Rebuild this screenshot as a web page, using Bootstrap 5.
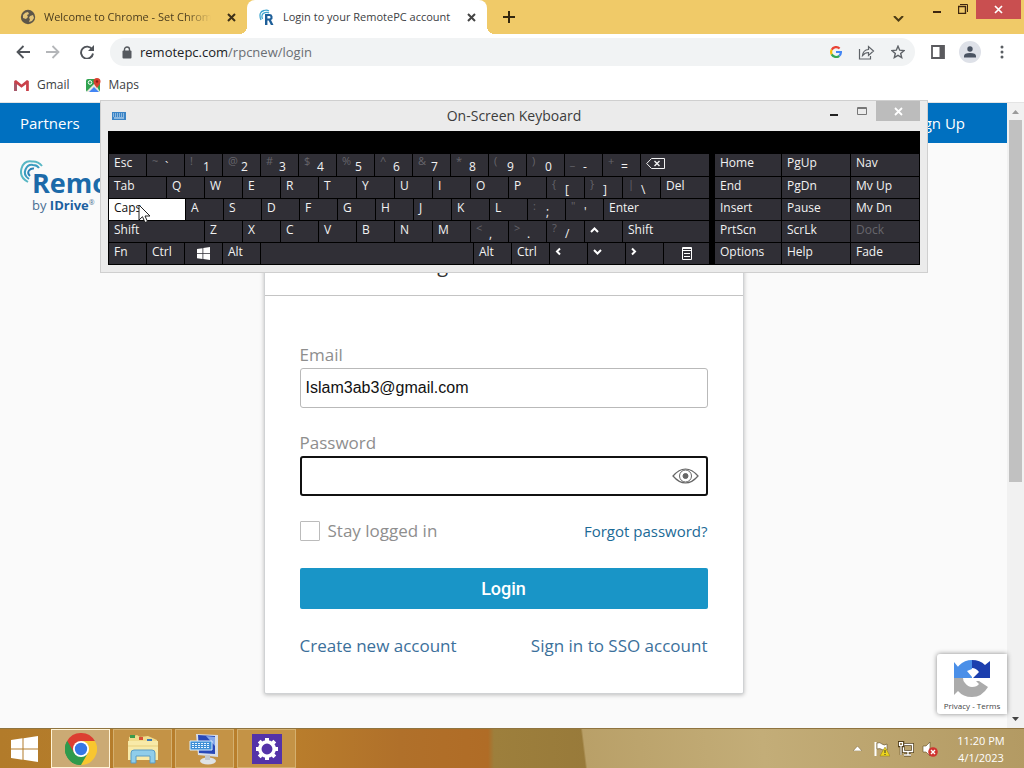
<!DOCTYPE html>
<html lang="en">
<head>
<meta charset="utf-8">
<meta name="viewport" content="width=device-width, initial-scale=1">
<title>Login to your RemotePC account</title>
<link rel="stylesheet" href="https://cdn.jsdelivr.net/npm/bootstrap@5.3.0/dist/css/bootstrap.min.css">
<script src="https://cdn.jsdelivr.net/npm/bootstrap@5.3.0/dist/js/bootstrap.bundle.min.js"></script>
<style>
  body { font-family: "Open Sans", "Noto Sans", sans-serif; font-size: 12px; line-height: 18px; color: #3c4043; overflow: hidden; }
  button { border: 0; background: none; padding: 0; color: inherit; line-height: inherit; font-family: inherit; font-size: inherit; }
  svg { display: block; flex: none; }
  a { text-decoration: none; }

  /* browser frame */
  .tabstrip { background: #f0ca68; height: 34px; color: #4a3c1e; }
  .tab-idle { width: 247px; padding: 0 11px 0 20px; }
  .tab-open { width: 240px; padding: 0 11px 0 12px; background: #fff; border-radius: 8px 8px 0 0; color: #3c4043; position: relative; }
  .tab-open::before, .tab-open::after { content: ""; position: absolute; bottom: 0; width: 8px; height: 8px; }
  .tab-open::before { right: 100%; background: radial-gradient(circle at 0 0, transparent 8px, #fff 8px); }
  .tab-open::after { left: 100%; background: radial-gradient(circle at 100% 0, transparent 8px, #fff 8px); }
  .tab-title { flex: 1 1 0; min-width: 0; overflow: hidden; white-space: nowrap; font-size: 11px; }
  .fade-end { -webkit-mask-image: linear-gradient(90deg, #000 85%, transparent); mask-image: linear-gradient(90deg, #000 85%, transparent); }
  .win-close { width: 45px; height: 19px; margin-right: 3px; background: #c94f50; }
  .toolbar { height: 36px; background: #fff; padding-right: 16px; }
  .omnibox { height: 28px; border-radius: 14px; background: #f1f3f4; padding: 0 10px 0 12px; }
  .url { font-size: 13px; color: #6a6e73; }
  .url b { font-weight: 400; color: #202124; }
  .avatar { width: 22px; height: 22px; border-radius: 50%; background: #dee1e8; margin: 0 19px 0 14px; }
  .bookmarks { height: 35px; margin-top: -2px; border-bottom: 1px solid #e4e4e4; background: #fff; padding: 0 14px; }
  .bookmarks a { color: #3c4043; }

  /* web page */
  .viewport { background: #fafafa; min-height: 0; overflow: hidden; }
  .site-nav { height: 40px; background: #0070c0; padding: 0 42px 0 20px; font-size: 15px; }
  .site-nav a { color: #fff; }
  .brand { padding: 17px 20px 0; height: 80px; }
  .brand-text { margin-left: -11px; padding-top: 9px; }
  .brand-name { font-size: 27px; line-height: 28px; font-weight: 700; color: #1c6aa9; }
  .brand-sub { font-size: 13px; line-height: 16px; color: #4a6f94; }
  .brand-sub b { color: #1c5f9f; }
  .brand-sub small { font-size: 7px; vertical-align: super; line-height: 8px; }
  .login-card { max-width: 480px; border: 1px solid #d0d2d4; border-radius: 2px; box-shadow: 0 1px 4px rgba(0,0,0,.25); background: #fff; }
  .login-head { height: 72px; border-bottom: 1px solid #c4c4c4; font-size: 20px; line-height: 24px; padding-top: 29px; color: #333; }
  .login-body { padding: 48px 35px 36px; font-size: 17px; line-height: 22px; color: #8e8e8e; }
  .field-label { display: block; margin-bottom: 2px; }
  .login-body .form-control { height: 40px; padding: 0 5px; border: 1px solid #b9b9b9; border-radius: 3px; font-family: "Liberation Sans", Arial, sans-serif; font-size: 16px; color: #111; }
  .login-body .form-control:focus, .login-body .pass { border: 2px solid #111; box-shadow: none; }
  .eye { position: absolute; right: 9px; top: 11px; }
  .login-body .form-check-input { width: 20px; height: 20px; margin: 0; border: 1px solid #bbb; border-radius: 1px; }
  .login-body a { color: #3b709b; }
  .login-body a.forgot { color: #1b6a96; font-size: 15px; }
  .btn-login { height: 41px; margin: 26px 0; background: #1995c7; color: #fff; border-radius: 2px; font-family: Roboto, sans-serif; font-weight: 500; font-size: 18px; }
  .scroller { width: 17px; background: #f1f1f1; padding: 7px 0; }
  .scroller i { width: 13px; height: 362px; background: #c1c1c1; margin-top: 6px; }
  .captcha { position: absolute; right: 0; bottom: 14px; width: 70px; height: 60px; background: #fff; border-radius: 3px 0 0 3px; box-shadow: 0 0 5px #888; font-size: 8px; line-height: 10px; color: #444; padding-top: 5px; }

  /* on-screen keyboard window */
  .osk { position: absolute; left: 100px; top: 100px; width: 828px; background: #ebebeb; border: 1px solid #cfcfcf; padding: 0 7px 7px; z-index: 5; }
  .osk-title { height: 30px; font-size: 14px; line-height: 30px; color: #3c3c3c; position: relative; }
  .osk-close { width: 44px; height: 20px; background: #bcbcbc; }
  .osk-min { width: 28px; height: 20px; }
  .osk-keys { background: #000; padding: 23px 1px 1px; color: #f2f2f2; gap: 6px; }
  .osk-main { width: 600px; gap: 1px; }
  .osk-side { flex: 1; grid-template: 22px / 66px 68px 1fr; grid-auto-rows: 21px; gap: 1px; }
  .osk-side, .krow { display: grid; }
  .krow { height: 21px; gap: 1px; }
  .krow:first-child { height: 22px; }
  .key { background: #302f36; text-align: left; padding-left: 5px; display: flex; white-space: nowrap; overflow: hidden; }
  .key i { font-style: normal; color: #66656b; width: 13px; font-size: 11px; line-height: 14px; }
  .key span { padding-top: 4px; line-height: 18px; }
  .key svg { margin-top: 4px; }
  .key .arrow-v { margin-top: 6px; }
  .key.pic { padding: 0; justify-content: center; }
  .key.lit { background: #fff; color: #111; }
  .key.dim { color: #67666c; }
  .r1 { grid-template-columns: repeat(14, 37px) 1fr; }
  .r2 { grid-template-columns: 57px repeat(13, 37px) 1fr; }
  .r3 { grid-template-columns: 76px repeat(11, 37px) 1fr; }
  .r4 { grid-template-columns: 95px repeat(11, 37px) 1fr; }
  .r5 { grid-template-columns: repeat(4, 37px) 212px repeat(5, 37px) 1fr; }
  .cursor { position: absolute; left: 37px; top: 103px; }

  /* taskbar */
  .taskbar { height: 40px; border-top: 1px solid #8f7440; gap: 3px;
    background: linear-gradient(83deg, transparent 581px, #b9a068 583px, #c3ad78 760px, #b39a63 100%), linear-gradient(90deg, #b27b2a 0, #ba7f2c 280px, #b0702a 400px, #b06c26 488px, #9d7f3c 494px, #987a3a 590px, #b9a068 600px); }
  .task { width: 59px; height: 39px; border: 1px solid #d4b06f; background: #c49346; }
  .task.on { background: #cbaa74; border: 1px solid #fff3d6; }
  .start { width: 48px; height: 39px; }
  .tray { color: #fff; gap: 8px; }
  .clock { line-height: 17px; width: 78px; padding-right: 8px; font-size: 11px; }
</style>
</head>
<body class="d-flex flex-column vh-100">

<header>
  <div class="tabstrip d-flex">
    <div class="tab-idle d-flex align-items-center">
      <svg class="me-2" width="16" height="16" viewBox="0 0 16 16"><circle cx="8" cy="8" r="7.2" fill="#5d5648"/><path d="M3 6q2-3 5-3l1 2-2 1 1 2-2 2-3-1zM10 7l3-1 1 3-2 3-3 1 1-3-1-1z" fill="#e3c477"/></svg>
      <span class="tab-title fade-end">Welcome to Chrome - Set Chrome</span>
      <button class="ms-3" aria-label="Close tab"><svg width="9" height="9" viewBox="0 0 9 9" stroke="#3d3018" stroke-width="2"><path d="M1 1l7 7M8 1l-7 7"/></svg></button>
    </div>
    <div class="tab-open d-flex align-items-center">
      <svg class="me-2" width="16" height="18" viewBox="0 0 16 18"><g fill="none" stroke="#3fa5cf" stroke-width="1.3"><path d="M2 12Q-1 4 5 2.500Q8 1.500 10 3"/><path d="M3.500 11Q1.500 6 6 4.600Q9 4 10 5"/></g><path d="M6 17V6h4.500a3.200 3.200 0 0 1 1.500 6l2.500 5h-2.600l-2.200-4.500H8.400V17zM8.400 8v2.600h1.800a1.300 1.300 0 0 0 0-2.600z" fill="#1e5f99"/></svg>
      <span class="tab-title">Login to your RemotePC account</span>
      <button aria-label="Close tab"><svg width="9" height="9" viewBox="0 0 9 9" stroke="#444" stroke-width="2"><path d="M1 1l7 7M8 1l-7 7"/></svg></button>
    </div>
    <button class="ms-3" aria-label="New tab"><svg width="12" height="12" viewBox="0 0 12 12" stroke="#33270f" stroke-width="2"><path d="M0 6h12M6 0v12"/></svg></button>
    <div class="ms-auto d-flex align-items-start">
      <button class="me-4 pt-3" aria-label="Search tabs"><svg class="me-1" width="11" height="7" viewBox="0 0 11 7" fill="none" stroke="#4c3b14" stroke-width="2"><path d="M1 0l4.500 4.500L10 0"/></svg></button>
      <button class="pt-1 me-3" aria-label="Minimize"><svg class="mt-1" width="10" height="6" viewBox="0 0 10 6"><path d="M1 3h8v2H1z" fill="#3d2610"/></svg></button>
      <button class="pt-1 me-2" aria-label="Restore"><svg width="10" height="10" viewBox="0 0 10 10" fill="none" stroke="#3d2610"><path d="M.5 2.500h7v7h-7z" stroke-width="1.400"/><path d="M2 .5h7.500V8"/></svg></button>
      <button class="win-close d-flex align-items-center justify-content-center" aria-label="Close"><svg width="9" height="9" viewBox="0 0 9 9" stroke="#fff" stroke-width="1.700"><path d="M1 1l7 7M8 1l-7 7"/></svg></button>
    </div>
  </div>

  <div class="toolbar d-flex align-items-center">
    <button class="ms-3" aria-label="Back"><svg width="14" height="14" viewBox="0 0 14 14" fill="none" stroke="#50545a" stroke-width="1.800"><path d="M14 7H1.500M7.500 1l-6 6 6 6"/></svg></button>
    <button class="ms-3" aria-label="Forward"><svg width="14" height="14" viewBox="0 0 14 14" fill="none" stroke="#b4b6b9" stroke-width="1.800"><path d="M0 7h12.500M6.500 1l6 6-6 6"/></svg></button>
    <button class="ms-3 me-3 ps-1" aria-label="Reload"><svg width="14" height="14" viewBox="0 0 14 14"><path d="M12.200 4.500A6 6 0 1 0 13 8.500" fill="none" stroke="#50545a" stroke-width="1.900"/><path d="M14 0v6H8z" fill="#50545a"/></svg></button>
    <div class="omnibox flex-grow-1 d-flex align-items-center">
      <svg width="10" height="13" viewBox="0 0 10 13"><path d="M2.500 5V3.500a2.500 2.500 0 0 1 5 0V5" fill="none" stroke="#55595e" stroke-width="1.400"/><rect x=".5" y="4.500" width="9" height="8" rx="1" fill="#55595e"/></svg>
      <span class="url ms-2 flex-grow-1"><b>remotepc.com</b>/rpcnew/login</span>
      <svg width="12" height="12" viewBox="0 0 12 12" fill="none" stroke-width="2.200"><path d="M9.600 2.500A5 5 0 0 0 1.700 3.800" stroke="#e94335"/><path d="M1.700 3.800a5 5 0 0 0 0 4.600" stroke="#fabb05"/><path d="M1.700 8.400a5 5 0 0 0 7.600 1.400" stroke="#34a853"/><path d="M9.300 9.800A4.800 4.800 0 0 0 10.900 6H6" stroke="#4285f4"/></svg>
      <svg class="ms-3 me-3" width="17" height="15" viewBox="0 0 17 15" fill="none" stroke="#5f6368" stroke-width="1.200"><path d="M1.500 4v10h11v-3"/><path d="M4.500 10.500Q5 5 10.500 4.500V1.500L15.500 6l-5 4.500v-3Q7 7.500 4.500 10.500z"/></svg>
      <svg width="14" height="14" viewBox="0 0 14 14" fill="none" stroke="#5f6368" stroke-width="1.400"><path d="M7 1.200l1.700 4 4.300.4-3.300 2.800 1 4.200L7 10.400l-3.700 2.200 1-4.200L1 5.600l4.300-.4z"/></svg>
    </div>
    <button class="ms-3" aria-label="Side panel"><svg width="14" height="14" viewBox="0 0 14 14"><path d="M1 1h12v12H1z" fill="none" stroke="#5a5a5e" stroke-width="1.800"/><path d="M8.500 1H13v12H8.500z" fill="#5a5a5e"/></svg></button>
    <button class="avatar d-flex align-items-center justify-content-center" aria-label="Profile"><svg width="12" height="12" viewBox="0 0 12 12" fill="#4a5362"><circle cx="6" cy="3" r="2.700"/><path d="M0 11.500V10q0-3 6-3t6 3v1.500z"/></svg></button>
    <button class="pe-1" aria-label="Menu"><svg width="4" height="14" viewBox="0 0 4 14" fill="#5a5e63"><circle cx="2" cy="2" r="1.500"/><circle cx="2" cy="7" r="1.500"/><circle cx="2" cy="12" r="1.500"/></svg></button>
  </div>

  <nav class="bookmarks d-flex align-items-center gap-3" aria-label="Bookmarks">
    <a href="#" class="d-flex align-items-center gap-2"><svg width="15" height="11" viewBox="0 0 16 12"><path d="M0 1v11h3V4.500L8 8.500l5-4V12h3V1L14 0 8 4.800 2 0z" fill="#c9414a"/><path d="M0 3v9h3V5z" fill="#a35a6c"/></svg>Gmail</a>
    <a href="#" class="d-flex align-items-center gap-2"><svg width="15" height="15" viewBox="0 0 15 15"><rect y="1" width="14" height="13" rx="2" fill="#30a350"/><path d="M0 14L9 5l5 9z" fill="#e8e8e0"/><path d="M3 14l5-5 5 5z" fill="#4285f4"/><path d="M8 2h6v3z" fill="#f4c430"/><circle cx="4" cy="4.500" r="1.800" fill="none" stroke="#fff"/><path d="M11 0a3.500 3.500 0 0 1 3.500 3.500Q14.500 6 11 10 7.500 6 7.500 3.500A3.500 3.500 0 0 1 11 0z" fill="#d8402f"/><circle cx="11" cy="3.500" r="1.200" fill="#8a1d14"/></svg>Maps</a>
  </nav>
</header>

<div class="viewport d-flex flex-grow-1">
  <main class="flex-grow-1 position-relative">
    <nav class="site-nav d-flex align-items-center justify-content-between"><a href="#">Partners</a><a href="#">Sign Up</a></nav>
    <div class="brand d-flex">
      <svg width="23" height="24" viewBox="0 0 23 24" fill="none" stroke-width="2"><path d="M8 22Q-1 17 1.500 8.500T12 1.500Q18 1 22 6" stroke="#58b7c4"/><path d="M9 19Q3 15 5.500 9.500T13 5Q17 5 19 8" stroke="#3a9cc0"/><path d="M10 16Q7 13 9 10.500T14 8.500" stroke="#2b82b5"/></svg>
      <div class="brand-text"><div class="brand-name">RemotePC</div><div class="brand-sub">by <b>IDrive</b><small>®</small></div></div>
    </div>
    <section class="login-card mx-auto">
      <h1 class="login-head text-center fw-normal m-0">Login to RemotePC</h1>
      <form class="login-body">
        <label class="field-label" for="email">Email</label>
        <input class="form-control mb-4" id="email" type="text" value="Islam3ab3@gmail.com">
        <label class="field-label" for="password">Password</label>
        <div class="position-relative">
          <input class="form-control pass" id="password" type="password">
          <svg class="eye" width="27" height="18" viewBox="0 0 27 18" fill="none" stroke="#666"><path d="M1 9Q7 2 13.500 2T26 9Q20 16 13.500 16T1 9z" stroke-width="1.200"/><circle cx="13.500" cy="9" r="6"/><circle cx="13.500" cy="9" r="2.500" fill="#666"/></svg>
        </div>
        <div class="d-flex align-items-center mt-4">
          <input class="form-check-input" id="stay" type="checkbox">
          <label class="ms-2" for="stay">Stay logged in</label>
          <a class="forgot ms-auto" href="#">Forgot password?</a>
        </div>
        <button class="btn-login w-100 d-block" type="button">Login</button>
        <div class="d-flex justify-content-between"><a href="#">Create new account</a><a href="#">Sign in to SSO account</a></div>
      </form>
    </section>
    <aside class="captcha text-center">
      <svg class="mx-auto mb-1" width="38" height="38" viewBox="0 0 38 38"><path d="M1 19A18 18 0 0 1 19 1v9l-5 2 5 6v1z" fill="#4a8fe8"/><path d="M1 3l5 6 4 10H1z" fill="#4a8fe8"/><path d="M19 1q8 0 13 5l5-4v17H20l6-6q-3-4-7-4z" fill="#1c3fae"/><path d="M1 19h9q0 3 2 5 3 4 7 4 5 0 7-3l-3-3h3l9 6q-6 10-16 10-9 0-14-6l-4 4z" fill="#ababab"/></svg>
      <a href="#" class="text-reset">Privacy</a> - <a href="#" class="text-reset">Terms</a>
    </aside>
  </main>
  <div class="scroller d-flex flex-column align-items-center">
    <svg width="7" height="4" viewBox="0 0 7 4"><path d="M0 4l3.500-4L7 4z" fill="#9a9a9a"/></svg>
    <i></i>
    <svg class="mt-auto" width="7" height="4" viewBox="0 0 7 4"><path d="M0 0l3.500 4L7 0z" fill="#444"/></svg>
  </div>
</div>

<section class="osk" aria-label="On-Screen Keyboard">
  <div class="osk-title d-flex align-items-start">
    <svg class="mt-2 ms-1" width="14" height="14" viewBox="0 0 14 14"><rect y="3" width="14" height="8" fill="#3c85c6"/><path d="M1 5h12M1 7h12" stroke="#dcebf8" stroke-dasharray="1 1"/><path d="M2 9h10" stroke="#dcebf8"/></svg>
    <div class="position-absolute start-0 end-0 text-center">On-Screen Keyboard</div>
    <div class="ms-auto d-flex">
      <button class="osk-min d-flex justify-content-center align-items-center" aria-label="Minimize keyboard"><svg class="mt-2" width="8" height="2"><path d="M0 0h8v2H0z" fill="#222"/></svg></button>
      <button class="osk-min d-flex justify-content-center align-items-center" aria-label="Maximize keyboard" disabled><svg width="10" height="8"><path d="M.5.5h9v7h-9zM0 1.500h10" fill="none" stroke="#777"/></svg></button>
      <button class="osk-close d-flex justify-content-center align-items-center" aria-label="Close keyboard"><svg width="9" height="9" viewBox="0 0 9 9" stroke="#fff" stroke-width="1.800"><path d="M1 1l7 7M8 1l-7 7"/></svg></button>
    </div>
  </div>
  <div class="osk-keys d-flex">
    <div class="osk-main d-flex flex-column">
      <div class="krow r1"><button class="key">Esc</button><button class="key"><i>~</i><span>`</span></button><button class="key"><i>!</i><span>1</span></button><button class="key"><i>@</i><span>2</span></button><button class="key"><i>#</i><span>3</span></button><button class="key"><i>$</i><span>4</span></button><button class="key"><i>%</i><span>5</span></button><button class="key"><i>^</i><span>6</span></button><button class="key"><i>&amp;</i><span>7</span></button><button class="key"><i>*</i><span>8</span></button><button class="key"><i>(</i><span>9</span></button><button class="key"><i>)</i><span>0</span></button><button class="key"><i>_</i><span>-</span></button><button class="key"><i>+</i><span>=</span></button><button class="key" aria-label="Backspace"><svg width="19" height="11" viewBox="0 0 19 11" fill="none" stroke="#f2f2f2"><path d="M5.500.5h13v10h-13L.7 5.500z"/><path d="M8.500 3l5 5M13.500 3l-5 5" stroke-width="1.400"/></svg></button></div>
      <div class="krow r2"><button class="key">Tab</button><button class="key">Q</button><button class="key">W</button><button class="key">E</button><button class="key">R</button><button class="key">T</button><button class="key">Y</button><button class="key">U</button><button class="key">I</button><button class="key">O</button><button class="key">P</button><button class="key"><i>{</i><span>[</span></button><button class="key"><i>}</i><span>]</span></button><button class="key"><i>|</i><span>\</span></button><button class="key">Del</button></div>
      <div class="krow r3"><button class="key lit">Caps</button><button class="key">A</button><button class="key">S</button><button class="key">D</button><button class="key">F</button><button class="key">G</button><button class="key">H</button><button class="key">J</button><button class="key">K</button><button class="key">L</button><button class="key"><i>:</i><span>;</span></button><button class="key"><i>"</i><span>'</span></button><button class="key">Enter</button></div>
      <div class="krow r4"><button class="key">Shift</button><button class="key">Z</button><button class="key">X</button><button class="key">C</button><button class="key">V</button><button class="key">B</button><button class="key">N</button><button class="key">M</button><button class="key"><i>&lt;</i><span>,</span></button><button class="key"><i>&gt;</i><span>.</span></button><button class="key"><i>?</i><span>/</span></button><button class="key" aria-label="Up"><svg class="arrow-v" width="9" height="6" fill="none" stroke="#fff" stroke-width="2"><path d="M1 5l3.500-3.500L8 5"/></svg></button><button class="key">Shift</button></div>
      <div class="krow r5"><button class="key">Fn</button><button class="key">Ctrl</button><button class="key pic" aria-label="Windows"><svg width="13" height="13" viewBox="0 0 13 13" fill="#fff"><path d="M0 2l5.500-.8V6H0zM6.300 1L13 0v6H6.300zM0 6.800h5.500V12L0 11.200zM6.300 6.800H13V13l-6.700-1z"/></svg></button><button class="key">Alt</button><button class="key" aria-label="Space"></button><button class="key">Alt</button><button class="key">Ctrl</button><button class="key" aria-label="Left"><svg width="6" height="9" fill="none" stroke="#fff" stroke-width="2"><path d="M5 1.500L2 4.500l3 3"/></svg></button><button class="key" aria-label="Down"><svg class="arrow-v" width="9" height="6" fill="none" stroke="#fff" stroke-width="2"><path d="M1 1l3.500 3.500L8 1"/></svg></button><button class="key" aria-label="Right"><svg width="6" height="9" fill="none" stroke="#fff" stroke-width="2"><path d="M1 1.500l3 3-3 3"/></svg></button><button class="key pic" aria-label="Menu key"><svg width="10" height="13" viewBox="0 0 10 13" fill="none" stroke="#fff"><path d="M.5.500h9v12h-9zM0 1.500h10M0 3.500h10M2 6.500h6M2 9.500h6"/></svg></button></div>
    </div>
    <div class="osk-side"><button class="key">Home</button><button class="key">PgUp</button><button class="key">Nav</button><button class="key">End</button><button class="key">PgDn</button><button class="key">Mv Up</button><button class="key">Insert</button><button class="key">Pause</button><button class="key">Mv Dn</button><button class="key">PrtScn</button><button class="key">ScrLk</button><button class="key dim">Dock</button><button class="key">Options</button><button class="key">Help</button><button class="key">Fade</button></div>
  </div>
  <svg class="cursor" width="13" height="20" viewBox="0 0 13 20"><path d="M1 1v15l3.500-3.300L7 18.500l2.500-1L7 12h5z" fill="#fff" stroke="#222"/></svg>
</section>

<footer class="taskbar d-flex align-items-center flex-shrink-0">
  <button class="start d-flex align-items-center justify-content-center" aria-label="Start"><svg width="27" height="26" viewBox="0 0 27 26" fill="#fff"><path d="M0 4l11.500-1.700V12.500H0zM12.500 2.200L27 0v12.500H12.500zM0 13.500h11.500v10.300L0 22zM12.500 13.500H27V26l-14.500-2.200z"/></svg></button>
  <button class="task on d-flex align-items-center justify-content-center" aria-label="Chrome"><svg width="32" height="32" viewBox="0 0 32 32"><path d="M16 16L2.140 8A16 16 0 0 1 29.860 8z" fill="#dc3e31"/><path d="M16 16L29.860 8A16 16 0 0 1 16 32z" fill="#f8c62f"/><path d="M16 16V32A16 16 0 0 1 2.140 8z" fill="#2f9a4c"/><path d="M16 8h13.860L23 20z" fill="#f8c62f"/><path d="M2.140 8L9 20l7-4V8z" fill="#dc3e31"/><path d="M2.140 8L9.100 20 16 24l6.900-4L16 32A16 16 0 0 1 2.140 8z" fill="#2f9a4c"/><circle cx="16" cy="16" r="8" fill="#fff"/><circle cx="16" cy="16" r="6.200" fill="#3577e5"/></svg></button>
  <button class="task d-flex align-items-center justify-content-center" aria-label="File Explorer"><svg width="32" height="30" viewBox="0 0 32 30"><path d="M2 3l8-2 3 2 8-1 9 4v20H1z" fill="#f0dc8c"/><path d="M3 1h5v3H3z" fill="#3c9a4a"/><path d="M12 3h4v3h-4z" fill="#d85036"/><path d="M20 5h5v2h-5z" fill="#3a78b8"/><path d="M1 7h30v19H1z" fill="#f8eaa8"/><path d="M1 12h30" stroke="#e6cf7c"/><path d="M4 29V19q0-3 3-3h18q3 0 3 3v10h-5v-7H9v7z" fill="#8fcdea" stroke="#5a9cc4"/></svg></button>
  <button class="task d-flex align-items-center justify-content-center" aria-label="On-Screen Keyboard"><svg width="32" height="32" viewBox="0 0 32 32"><path d="M7 1l22 1v22L9 22z" fill="#d8dde6"/><path d="M9 2l17 1v18L10 20z" fill="#2848b8"/><path d="M17 3l9 1v9z" fill="#86a8ea"/><ellipse cx="19" cy="28" rx="8" ry="3.500" fill="#dfe3e6"/><path d="M16 22h5v5h-5z" fill="#c3c8ce"/><path d="M1 8h22v9H1z" fill="#3f8fd6" stroke="#dcefff"/><path d="M3 10.500h18M3 12.500h18M3 14.500h18" stroke="#e8f5ff" stroke-dasharray="2 1"/></svg></button>
  <button class="task d-flex align-items-center justify-content-center" aria-label="Settings"><svg width="30" height="30" viewBox="0 0 30 30"><path d="M0 0h30v30H0z" fill="#5433a8"/><circle cx="15" cy="15" r="7.200" fill="none" stroke="#fff" stroke-width="3.500"/><path d="M15 4v4M15 22v4M4 15h4M22 15h4M7.200 7.200L10 10M20 20l2.800 2.800M7.200 22.800L10 20M20 10l2.800-2.800" stroke="#fff" stroke-width="4"/></svg></button>
  <div class="tray ms-auto d-flex align-items-center">
    <svg class="me-1" width="9" height="5" viewBox="0 0 9 5"><path d="M0 5l4.500-5L9 5z" fill="#fff" stroke="#776033" stroke-width=".5"/></svg>
    <svg width="16" height="16" viewBox="0 0 16 16"><path d="M1.500 1v14" stroke="#fff" stroke-width="2"/><path d="M3 2q3-1 5 1t5 0v6q-3 1-5-.500T3 8z" fill="#fff" stroke="#5d4a22" stroke-width=".6"/><path d="M11 6l5 9H6z" fill="#ecd51e" stroke="#8c7910" stroke-width=".5"/><path d="M11 9v3M11 13v1" stroke="#333"/></svg>
    <svg width="16" height="16" viewBox="0 0 16 16" fill="none"><path d="M5.500 3.500h9v7h-9zM10 11v3M6 14h7" stroke="#503d18" stroke-width="2.800"/><path d="M5.500 3.500h9v7h-9zM10 11v3M6 14h7" stroke="#fff" stroke-width="1.400"/><path d="M1 1h4v4H1zM3 5v9" stroke="#503d18" stroke-width="2.500"/><path d="M1.500 1.500h3v3h-3zM3 5v9" stroke="#fff" stroke-width="1.200"/></svg>
    <svg width="16" height="16" viewBox="0 0 16 16"><path d="M1 5h3l4-4v14l-4-4H1z" fill="#fff" stroke="#5d4a22" stroke-width=".6"/><circle cx="11" cy="11" r="4.800" fill="#cf3430"/><path d="M9 9l4 4M13 9l-4 4" stroke="#fff" stroke-width="1.400"/></svg>
    <div class="clock text-center"><div>11:20 PM</div><div>4/1/2023</div></div>
  </div>
</footer>
</body>
</html>
